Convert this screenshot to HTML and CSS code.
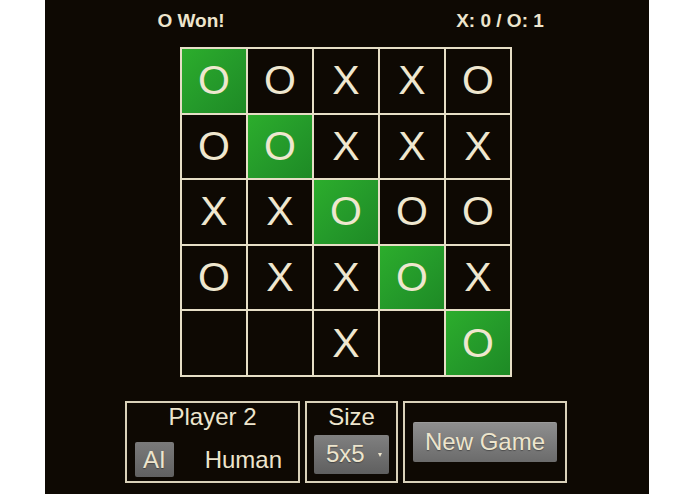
FILE: index.html
```html
<!DOCTYPE html>
<html>
<head>
<meta charset="utf-8">
<link rel="stylesheet" href="styles.css">
</head>
<body>
<div class="panel">
  <div class="header">
    <div class="status">O Won!</div>
    <div class="score">X: 0 / O: 1</div>
  </div>
  <div class="board">
    <div class="cell win">O</div><div class="cell">O</div><div class="cell">X</div><div class="cell">X</div><div class="cell">O</div>
    <div class="cell">O</div><div class="cell win">O</div><div class="cell">X</div><div class="cell">X</div><div class="cell">X</div>
    <div class="cell">X</div><div class="cell">X</div><div class="cell win">O</div><div class="cell">O</div><div class="cell">O</div>
    <div class="cell">O</div><div class="cell">X</div><div class="cell">X</div><div class="cell win">O</div><div class="cell">X</div>
    <div class="cell"></div><div class="cell"></div><div class="cell">X</div><div class="cell"></div><div class="cell win">O</div>
  </div>
  <div class="controls">
    <div class="box box-player">
      <div class="label">Player 2</div>
      <div class="toggle">
        <span class="opt active">AI</span>
        <span class="opt">Human</span>
      </div>
    </div>
    <div class="box box-size">
      <div class="label">Size</div>
      <div class="select"><span>5x5</span><span class="arrow"></span></div>
    </div>
    <div class="box box-new">
      <div class="btn">New Game</div>
    </div>
  </div>
</div>
</body>
</html>
```

FILE: styles.css
```css
html, body {
  margin: 0;
  padding: 0;
  background: #ffffff;
}
body {
  font-family: "Liberation Sans", Arial, sans-serif;
  color: #ede5cd;
}
.panel {
  margin-left: 45px;
  width: 604px;
  height: 494px;
  background: #0e0903;
  display: flex;
  flex-direction: column;
  align-items: center;
}
.header {
  width: 100%;
  height: 47px;
  display: grid;
  grid-template-columns: 292px 1fr;
  font-weight: bold;
  font-size: 19px;
  line-height: 22px;
  box-sizing: border-box;
  padding-top: 10px;
}
.status {
  text-align: center;
}
.score {
  text-align: center;
  padding-left: 14px;
}
.board {
  display: grid;
  grid-template-columns: repeat(5, 64px);
  grid-auto-rows: 63.6px;
  gap: 2px;
  padding: 2px;
  background: #e6dec6;
  margin-left: -2px;
}
.cell {
  background: #0e0903;
  display: flex;
  align-items: center;
  justify-content: center;
  font-size: 41px;
  color: #efe7cf;
}
.cell.win {
  background: linear-gradient(135deg, #2cad2c 0%, #24992a 55%, #1e8a25 100%);
}
.controls {
  display: flex;
  gap: 5px;
  margin-top: 24px;
  height: 82px;
  margin-left: -2px;
}
.box {
  border: 2px solid #d9d1b9;
  box-sizing: border-box;
  display: flex;
  flex-direction: column;
  align-items: center;
}
.box-player { width: 175px; }
.box-size { width: 93px; }
.box-new { width: 164px; justify-content: center; }
.label {
  font-size: 24px;
  line-height: 26px;
  padding-top: 1px;
}
.toggle {
  width: 100%;
  box-sizing: border-box;
  padding: 0 8px;
  margin-top: 12px;
  display: flex;
  justify-content: space-between;
  align-items: center;
}
.opt {
  font-size: 24px;
  line-height: 35px;
  height: 35px;
  padding: 0 8px;
  border-radius: 2px;
}
.opt.active {
  background: linear-gradient(#7a7a7a, #616161);
  text-shadow: 0 1px 1px rgba(0,0,0,0.35);
}
.select {
  margin-top: 5px;
  width: 75px;
  height: 39px;
  border-radius: 2px;
  background: linear-gradient(#808080, #5f5f5f);
  display: flex;
  align-items: center;
  font-size: 24px;
  box-sizing: border-box;
  padding-left: 12px;
  text-shadow: 0 1px 1px rgba(0,0,0,0.35);
}
.arrow {
  width: 0;
  height: 0;
  border-left: 2.5px solid transparent;
  border-right: 2.5px solid transparent;
  border-top: 4px solid #ede5cd;
  margin-left: 13px;
  margin-top: 2px;
}
.btn {
  width: 144px;
  height: 40px;
  border-radius: 2px;
  background: linear-gradient(#8e8e8e, #6b6b6b);
  border-top: 1px solid #9a9a9a;
  box-sizing: border-box;
  font-size: 24px;
  line-height: 38px;
  text-align: center;
  text-shadow: 0 1px 1px rgba(0,0,0,0.35);
}
```
